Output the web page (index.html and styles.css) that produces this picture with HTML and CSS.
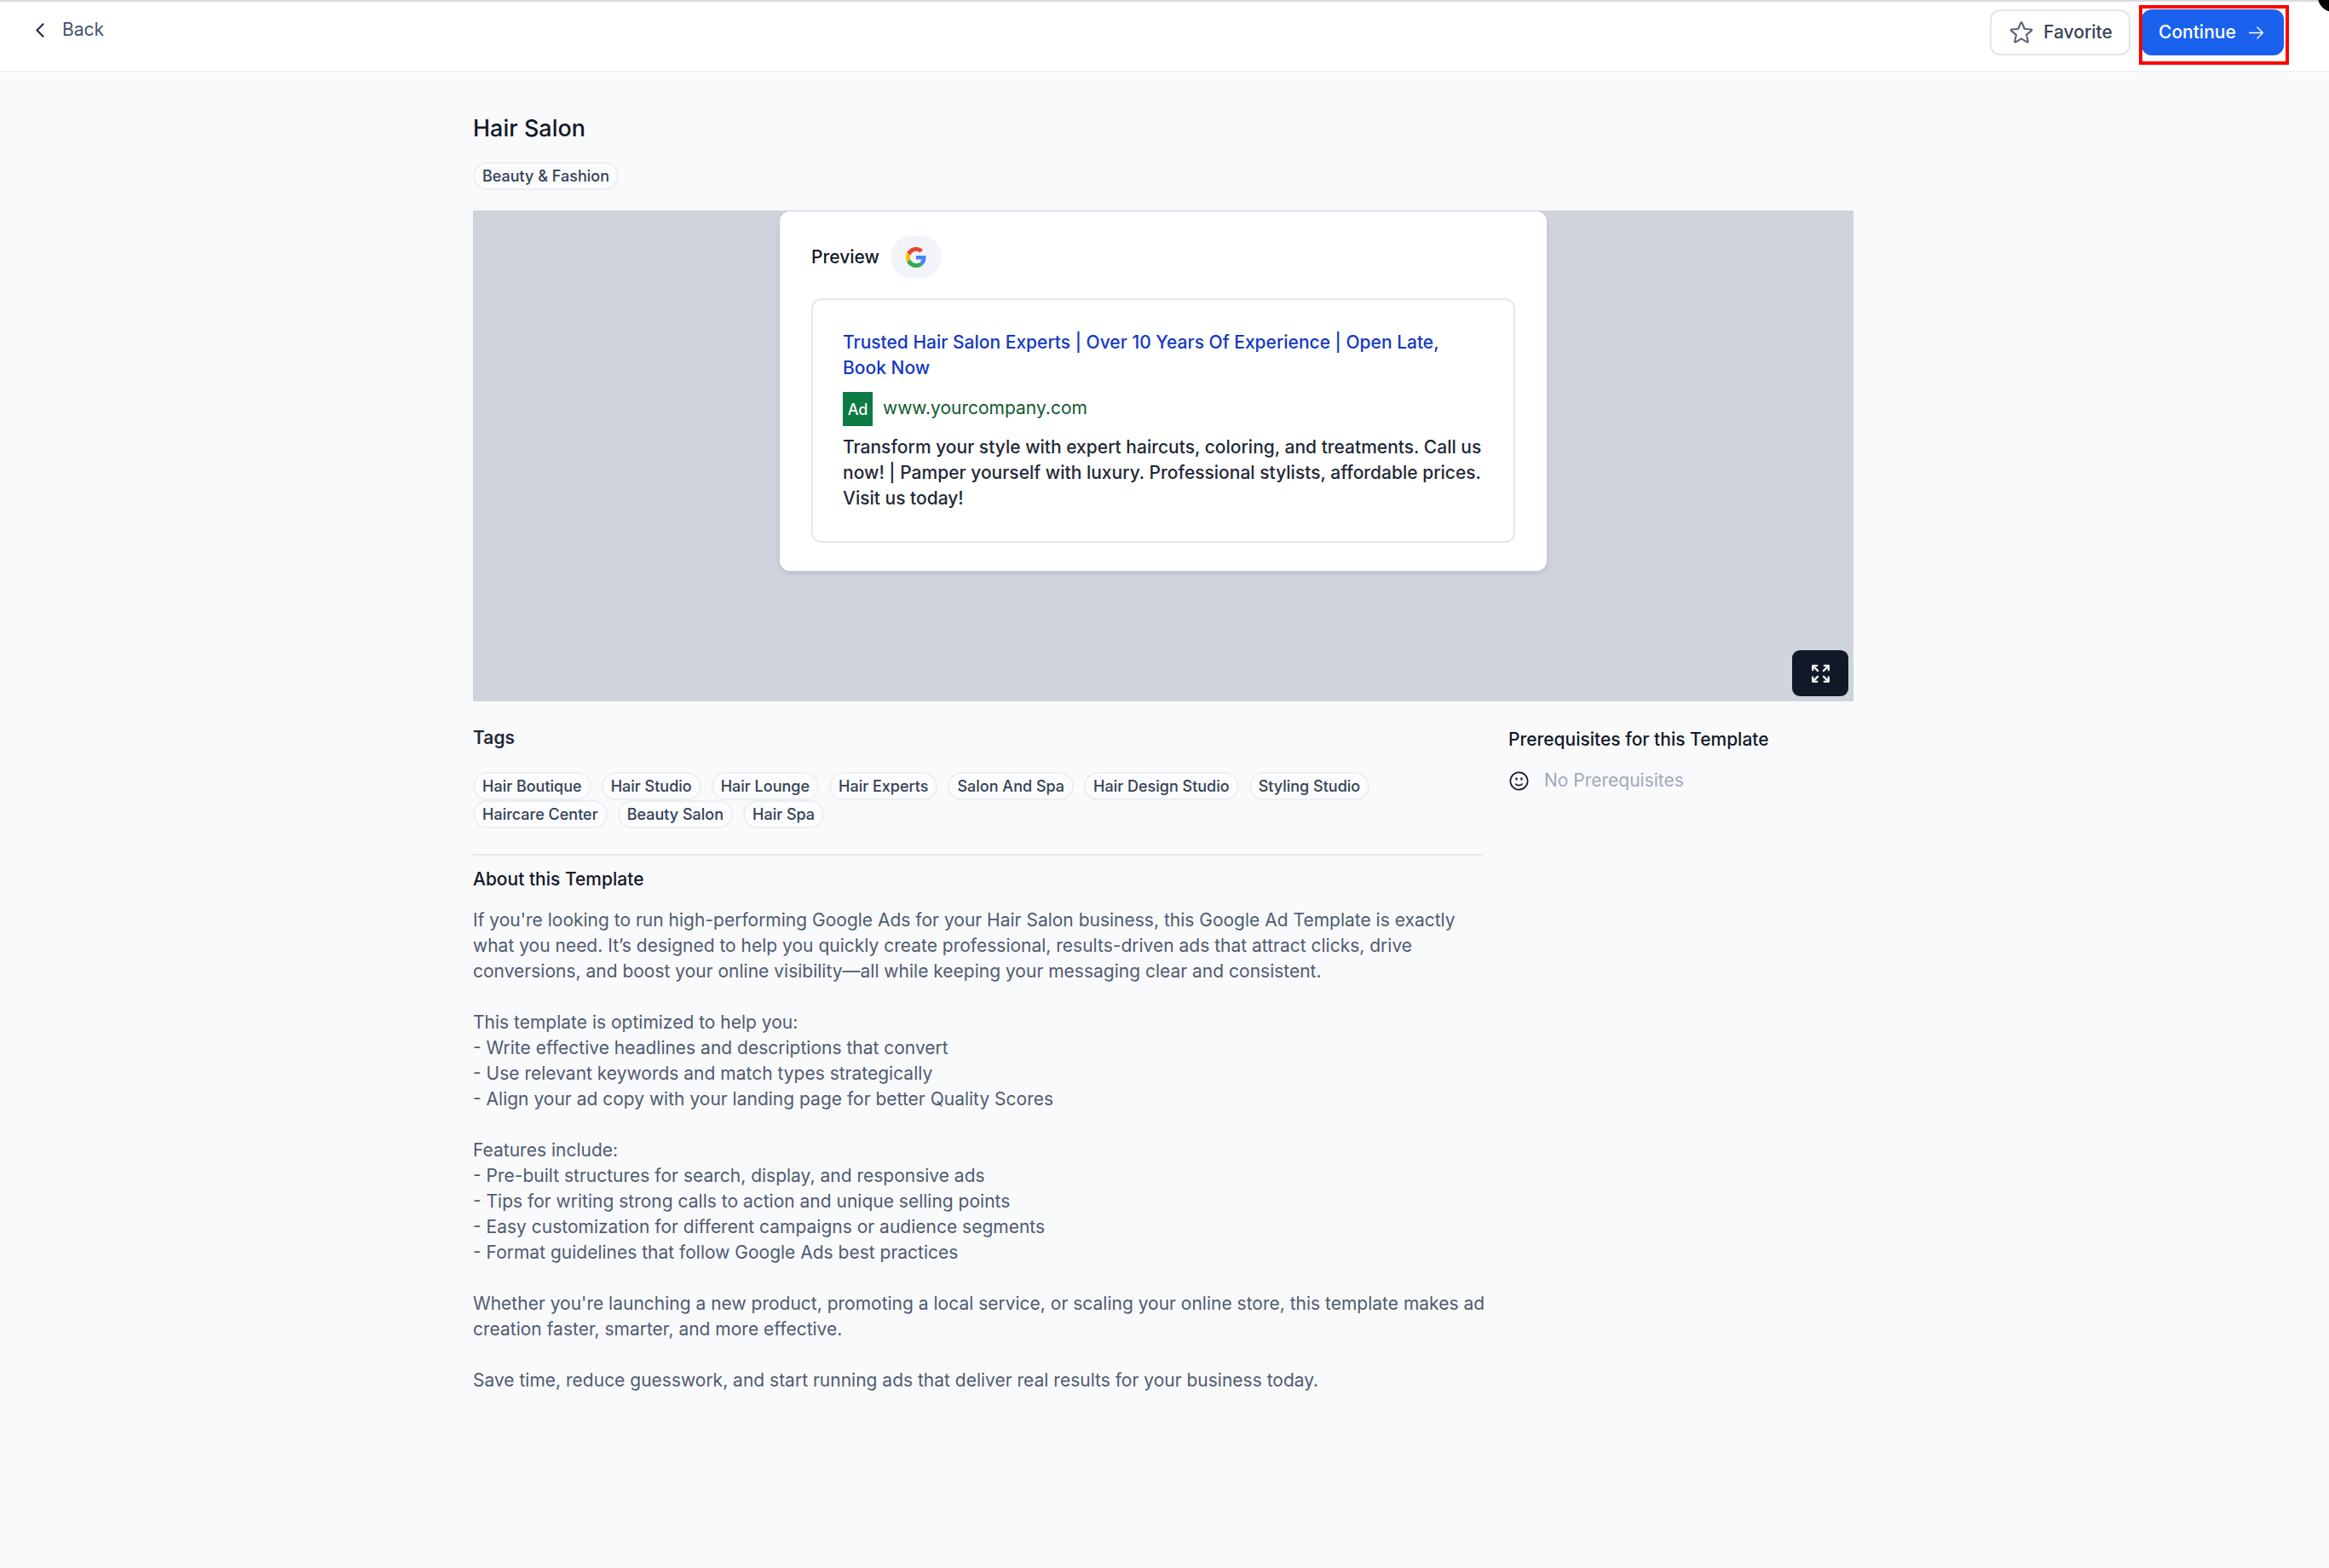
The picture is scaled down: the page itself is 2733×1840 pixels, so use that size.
FILE: index.html
```html
<!DOCTYPE html>
<html lang="en">
<head>
<meta charset="utf-8">
<title>Hair Salon</title>
<link rel="stylesheet" href="styles.css">
</head>
<body>
<header class="topbar">
  <a class="back">
    <svg class="back-icon" viewBox="0 0 10 17" fill="none" stroke="currentColor" stroke-width="2" stroke-linecap="round" stroke-linejoin="round"><path d="M8.6 1.3L1.4 8.5l7.2 7.2"/></svg>
    <span>Back</span>
  </a>
  <div class="actions">
    <button class="btn btn-fav">
      <svg class="star" viewBox="0 0 24 24" fill="none" stroke="currentColor" stroke-width="1.6" stroke-linecap="round" stroke-linejoin="round"><path d="M11.48 3.499a.562.562 0 011.04 0l2.125 5.111a.563.563 0 00.475.345l5.518.442c.499.04.701.663.321.988l-4.204 3.602a.563.563 0 00-.182.557l1.285 5.385a.562.562 0 01-.84.61l-4.725-2.885a.562.562 0 00-.586 0L6.982 20.54a.562.562 0 01-.84-.61l1.285-5.386a.562.562 0 00-.182-.557l-4.204-3.602a.563.563 0 01.321-.988l5.518-.442a.563.563 0 00.475-.345L11.48 3.5z"/></svg>
      Favorite
    </button>
    <button class="btn btn-primary">
      Continue
      <svg class="arrow" viewBox="0 0 24 24" fill="none" stroke="currentColor" stroke-width="1.5" stroke-linecap="round" stroke-linejoin="round"><path d="M13.5 4.5L21 12m0 0l-7.5 7.5M21 12H3"/></svg>
    </button>
  </div>
</header>
<div class="highlight"></div>
<div class="corner"></div>

<main class="page">
  <h1 class="title">Hair Salon</h1>
  <div class="chips category"><span class="chip">Beauty &amp; Fashion</span></div>

  <section class="stage">
    <div class="card">
      <div class="card-head">
        <span class="card-label">Preview</span>
        <span class="g-badge">
          <svg viewBox="0 0 48 48" class="g-logo"><path fill="#EA4335" d="M24 9.5c3.54 0 6.71 1.22 9.21 3.6l6.85-6.85C35.9 2.38 30.47 0 24 0 14.62 0 6.51 5.38 2.56 13.22l7.98 6.19C12.43 13.72 17.74 9.5 24 9.5z"/><path fill="#4285F4" d="M46.98 24.55c0-1.57-.15-3.09-.38-4.55H24v9.02h12.94c-.58 2.96-2.26 5.48-4.78 7.18l7.73 6c4.51-4.18 7.09-10.36 7.09-17.65z"/><path fill="#FBBC05" d="M10.53 28.59c-.48-1.45-.76-2.99-.76-4.59s.27-3.14.76-4.59l-7.98-6.19C.92 16.46 0 20.12 0 24c0 3.88.92 7.54 2.56 10.78l7.97-6.19z"/><path fill="#34A853" d="M24 48c6.48 0 11.93-2.13 15.89-5.81l-7.73-6c-2.15 1.45-4.92 2.3-8.16 2.3-6.26 0-11.57-4.22-13.47-9.91l-7.98 6.19C6.51 42.62 14.62 48 24 48z"/></svg>
        </span>
      </div>
      <div class="ad">
        <p class="ad-title">Trusted Hair Salon Experts | Over 10 Years Of Experience | Open Late, Book Now</p>
        <div class="ad-url"><span class="ad-badge">Ad</span><span class="ad-link">www.yourcompany.com</span></div>
        <p class="ad-body">Transform your style with expert haircuts, coloring, and treatments. Call us now! | Pamper yourself with luxury. Professional stylists, affordable prices. Visit us today!</p>
      </div>
    </div>
    <button class="expand">
      <svg viewBox="0 0 24 24" fill="none" stroke="currentColor" stroke-width="2" stroke-linecap="round" stroke-linejoin="round"><path d="M3.75 3.75v4.5m0-4.5h4.5m-4.5 0L9 9M3.75 20.25v-4.5m0 4.5h4.5m-4.5 0L9 15M20.25 3.75h-4.5m4.5 0v4.5m0-4.5L15 9m5.25 11.25h-4.5m4.5 0v-4.5m0 4.5L15 15"/></svg>
    </button>
  </section>

  <div class="columns">
    <div class="col-main">
      <h2 class="tags-title">Tags</h2>
      <div class="chips tags">
        <span class="chip">Hair Boutique</span>
        <span class="chip">Hair Studio</span>
        <span class="chip">Hair Lounge</span>
        <span class="chip">Hair Experts</span>
        <span class="chip">Salon And Spa</span>
        <span class="chip">Hair Design Studio</span>
        <span class="chip">Styling Studio</span>
        <span class="chip">Haircare Center</span>
        <span class="chip">Beauty Salon</span>
        <span class="chip">Hair Spa</span>
      </div>
      <hr class="rule">
      <h2 class="about-title">About this Template</h2>
      <p class="about">If you're looking to run high-performing Google Ads for your Hair Salon business, this Google Ad Template is exactly what you need. It’s designed to help you quickly create professional, results-driven ads that attract clicks, drive conversions, and boost your online visibility—all while keeping your messaging clear and consistent.

This template is optimized to help you:
- Write effective headlines and descriptions that convert
- Use relevant keywords and match types strategically
- Align your ad copy with your landing page for better Quality Scores

Features include:
- Pre-built structures for search, display, and responsive ads
- Tips for writing strong calls to action and unique selling points
- Easy customization for different campaigns or audience segments
- Format guidelines that follow Google Ads best practices

Whether you're launching a new product, promoting a local service, or scaling your online store, this template makes ad creation faster, smarter, and more effective.

Save time, reduce guesswork, and start running ads that deliver real results for your business today.</p>
    </div>
    <aside class="col-side">
      <h2 class="side-title">Prerequisites for this Template</h2>
      <div class="none">
        <svg class="smile" viewBox="0 0 24 24" fill="none" stroke="currentColor" stroke-width="1.5" stroke-linecap="round" stroke-linejoin="round"><path d="M15.182 15.182a4.5 4.5 0 01-6.364 0M21 12a9 9 0 11-18 0 9 9 0 0118 0zM9.75 9.75c0 .414-.168.75-.375.75S9 10.164 9 9.75 9.168 9 9.375 9s.375.336.375.75zm-.375 0h.008v.015h-.008V9.75zm5.625 0c0 .414-.168.75-.375.75s-.375-.336-.375-.75.168-.75.375-.75.375.336.375.75zm-.375 0h.008v.015h-.008V9.75z"/></svg>
        <span>No Prerequisites</span>
      </div>
    </aside>
  </div>
</main>
</body>
</html>
```
FILE: styles.css
```css
* { box-sizing: border-box; }
html, body { margin: 0; height: 100%; overflow: hidden; }
body {
  background: #f9fafc;
  font-family: Inter, "Liberation Sans", sans-serif;
  color: #111827;
  height: 1840px;
  position: relative;
}
h1, h2, p { margin: 0; }

.topbar {
  height: 85px;
  background: #fff;
  border-top: 2px solid #d9dadc;
  border-bottom: 2px solid #f0f1f3;
  display: flex;
  justify-content: space-between;
  align-items: flex-start;
  padding: 9px 53px 0 42px;
}
.back {
  display: flex;
  align-items: center;
  gap: 21px;
  font-size: 21px;
  line-height: 30px;
  color: #475569;
  margin-top: 9px;
}
.back-icon { width: 10px; height: 17px; color: #1e293b; }
.actions { display: flex; gap: 13px; }
.btn {
  height: 54px;
  border-radius: 12px;
  font: 500 21px/30px Inter, "Liberation Sans", sans-serif;
  display: flex;
  align-items: center;
}
.btn-fav {
  width: 165px;
  justify-content: center;
  gap: 10px;
  background: #fff;
  border: 2px solid #e2e5eb;
  color: #374151;
}
.star { width: 32px; height: 32px; color: #5b6578; }
.btn-primary {
  width: 167px;
  padding: 0 0 0 20px;
  gap: 13px;
  background: #1a61ee;
  border: 0;
  color: #fff;
}
.arrow { width: 21px; height: 21px; }

.highlight {
  position: absolute;
  left: 2510px;
  top: 6px;
  width: 176px;
  height: 70px;
  border: 4px solid #f00;
}
.corner {
  position: absolute;
  left: 2720px;
  top: -22px;
  width: 36px;
  height: 36px;
  border-radius: 50%;
  background: #000;
}

.page { width: 2175px; padding: 48px 0 0 555px; }
.title { font-size: 27px; line-height: 36px; font-weight: 500; color: #111827; }
.chips { display: flex; flex-wrap: wrap; }
.category { margin-top: 21px; }
.chip {
  height: 33px;
  padding: 0 9px;
  border: 2px solid #eceef1;
  border-radius: 17px;
  font-size: 18px;
  line-height: 29px;
  font-weight: 500;
  color: #334155;
  background: #fbfcfd;
}

.stage {
  position: relative;
  margin-top: 24px;
  height: 576px;
  background: #cfd4dc;
  display: flex;
  justify-content: center;
  align-items: flex-start;
  padding-top: 1px;
}
.card {
  width: 900px;
  height: 422px;
  background: #fff;
  border-radius: 12px;
  padding: 29px 37px 0;
  box-shadow: 0 3px 6px rgba(17, 24, 39, .12);
}
.card-head { display: flex; align-items: center; gap: 13px; }
.card-label { font-size: 21px; line-height: 30px; font-weight: 500; color: #111827; }
.g-badge {
  width: 60px;
  height: 49px;
  border-radius: 25px;
  background: #f1f4f8;
  display: flex;
  align-items: center;
  justify-content: center;
}
.g-logo { width: 24px; height: 24px; }
.ad {
  margin-top: 24px;
  width: 826px;
  height: 287px;
  border: 2px solid #e5e7eb;
  border-radius: 12px;
  padding: 35px 35px;
}
.ad-title { font-size: 21px; line-height: 30px; font-weight: 500; color: #1238c4; }
.ad-url {
  display: flex;
  align-items: center;
  gap: 12px;
  margin-top: 13px;
  font-size: 21px;
  color: #0f5a30;
}
.ad-link { margin-bottom: 3px; }
.ad-badge {
  width: 35px;
  height: 40px;
  background: #0b7a43;
  color: #fff;
  font-size: 18px;
  font-weight: 500;
  display: flex;
  align-items: center;
  justify-content: center;
}
.ad-body { margin-top: 10px; font-size: 21px; line-height: 30px; font-weight: 500; color: #1f2937; }
.expand {
  position: absolute;
  right: 6px;
  bottom: 6px;
  width: 66px;
  height: 54px;
  border: 0;
  border-radius: 9px;
  background: #111827;
  color: #fff;
  padding: 0;
  display: flex;
  align-items: center;
  justify-content: center;
}
.expand svg { width: 27px; height: 27px; }

.columns { display: flex; gap: 30px; margin-top: 28px; }
.col-main { width: 1185px; }
.col-side { flex: 1; }
.tags-title { font-size: 21px; line-height: 30px; font-weight: 600; color: #1f2937; }
.tags { margin-top: 25px; column-gap: 12px; }
.rule { border: 0; border-top: 2px solid #e3e6e8; margin: 30px 0 0; }
.about-title { margin-top: 13px; font-size: 21px; line-height: 30px; font-weight: 500; color: #111827; }
.about { margin: 18px -10px 0 0; font-size: 21px; line-height: 30px; color: #4f5b70; white-space: pre-line; }
.side-title { margin-top: 2px; font-size: 21px; line-height: 30px; font-weight: 500; color: #111827; }
.none { display: flex; align-items: center; gap: 16px; margin-top: 18px; font-size: 21px; line-height: 30px; color: #a0aabb; }
.smile { width: 27px; height: 27px; margin-left: -1px; color: #111827; }
```
